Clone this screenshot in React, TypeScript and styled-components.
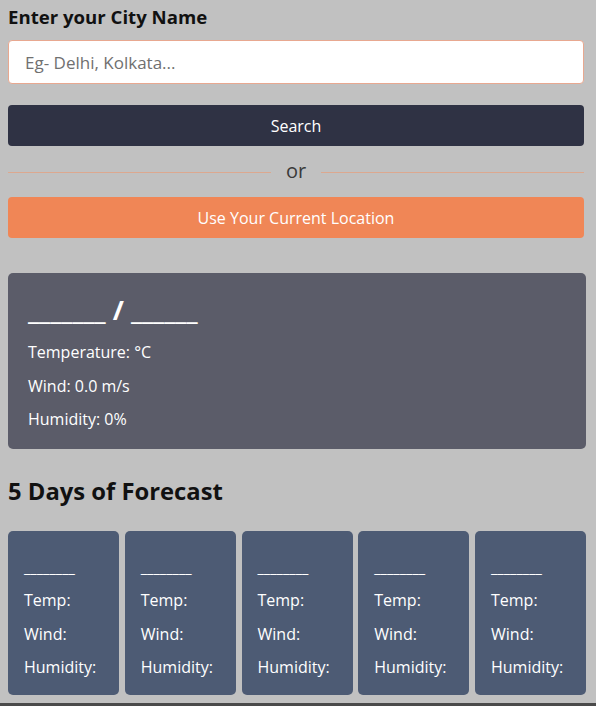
import React from "react";
import styled, { createGlobalStyle } from "styled-components";

const Global = createGlobalStyle`
  html, body { margin: 0; padding: 0; background: #c1c1c1; }
  body { font-family: "Open Sans", "Noto Sans", sans-serif; overflow: hidden; }
  * { box-sizing: border-box; }
`;

const Page = styled.div`
  padding: 0 8px;
  height: 706px;
  position: relative;
`;

const Search = styled.div`
  width: 576px;
  display: flex;
  flex-direction: column;
`;

const Label = styled.h3`
  margin: 5px 0 11px;
  font-size: 18.6px;
  line-height: 24px;
  font-weight: 700;
  color: #111;
`;

const Input = styled.input`
  height: 44px;
  width: 100%;
  border: 1px solid #e8a890;
  border-radius: 4px;
  background: #fff;
  padding: 0 16px;
  font-family: inherit;
  font-size: 17px;
  color: #333;
  outline: none;
  &::placeholder { color: #707070; }
`;

const Button = styled.button<{ $variant: "dark" | "orange" }>`
  height: 41px;
  width: 100%;
  border: none;
  border-radius: 4px;
  font-family: inherit;
  font-size: 16px;
  color: #fff;
  background: ${(p) => (p.$variant === "dark" ? "#2f3244" : "#f08656")};
  margin-top: ${(p) => (p.$variant === "dark" ? "21px" : "13px")};
  cursor: pointer;
`;

const Divider = styled.div`
  margin-top: 14px;
  height: 24px;
  display: flex;
  align-items: center;
  gap: 15px;
  &::before, &::after {
    content: "";
    flex: 1;
    height: 1px;
    background: #dca88f;
  }
`;

const Or = styled.span`
  font-size: 20px;
  color: #3a3a3a;
  line-height: 24px;
  margin-top: -3px;
`;

const Current = styled.div`
  margin-top: 35px;
  width: 578px;
  height: 176px;
  background: #5b5c69;
  border-radius: 5px;
  padding: 19px 20px 0;
  color: #fff;
`;

const CityTitle = styled.h2`
  margin: 0 0 8px;
  font-size: 27px;
  line-height: 36px;
  font-weight: 700;
`;

const Stat = styled.p`
  margin: 0;
  font-size: 16px;
  line-height: 33.5px;
`;

const ForecastTitle = styled.h2`
  margin: 27px 0 25px;
  font-size: 23.8px;
  line-height: 30px;
  font-weight: 700;
  color: #111;
`;

const Cards = styled.div`
  width: 578px;
  display: grid;
  grid-template-columns: repeat(5, 1fr);
  gap: 5.75px;
`;

const Card = styled.div`
  height: 164px;
  background: #4d5b74;
  border-radius: 5px;
  padding: 24px 16px 0;
  color: #fff;
`;

const Day = styled.h3`
  margin: 0 0 5px;
  font-size: 15px;
  line-height: 24px;
  font-weight: 600;
`;

const Bottom = styled.div`
  position: absolute;
  left: 0;
  right: 0;
  bottom: 0;
  height: 3px;
  background: #4a4a4a;
`;

export default function App() {
  const days = [0, 1, 2, 3, 4];
  return (
    <Page>
      <Global />
      <Search>
        <Label>Enter your City Name</Label>
        <Input placeholder="Eg- Delhi, Kolkata..." />
        <Button $variant="dark">Search</Button>
        <Divider>
          <Or>or</Or>
        </Divider>
        <Button $variant="orange">Use Your Current Location</Button>
      </Search>
      <Current>
        <CityTitle>_______ / ______</CityTitle>
        <Stat>Temperature: °C</Stat>
        <Stat>Wind: 0.0 m/s</Stat>
        <Stat>Humidity: 0%</Stat>
      </Current>
      <ForecastTitle>5 Days of Forecast</ForecastTitle>
      <Cards>
        {days.map((d) => (
          <Card key={d}>
            <Day>________</Day>
            <Stat>Temp:</Stat>
            <Stat>Wind:</Stat>
            <Stat>Humidity:</Stat>
          </Card>
        ))}
      </Cards>
      <Bottom />
    </Page>
  );
}
